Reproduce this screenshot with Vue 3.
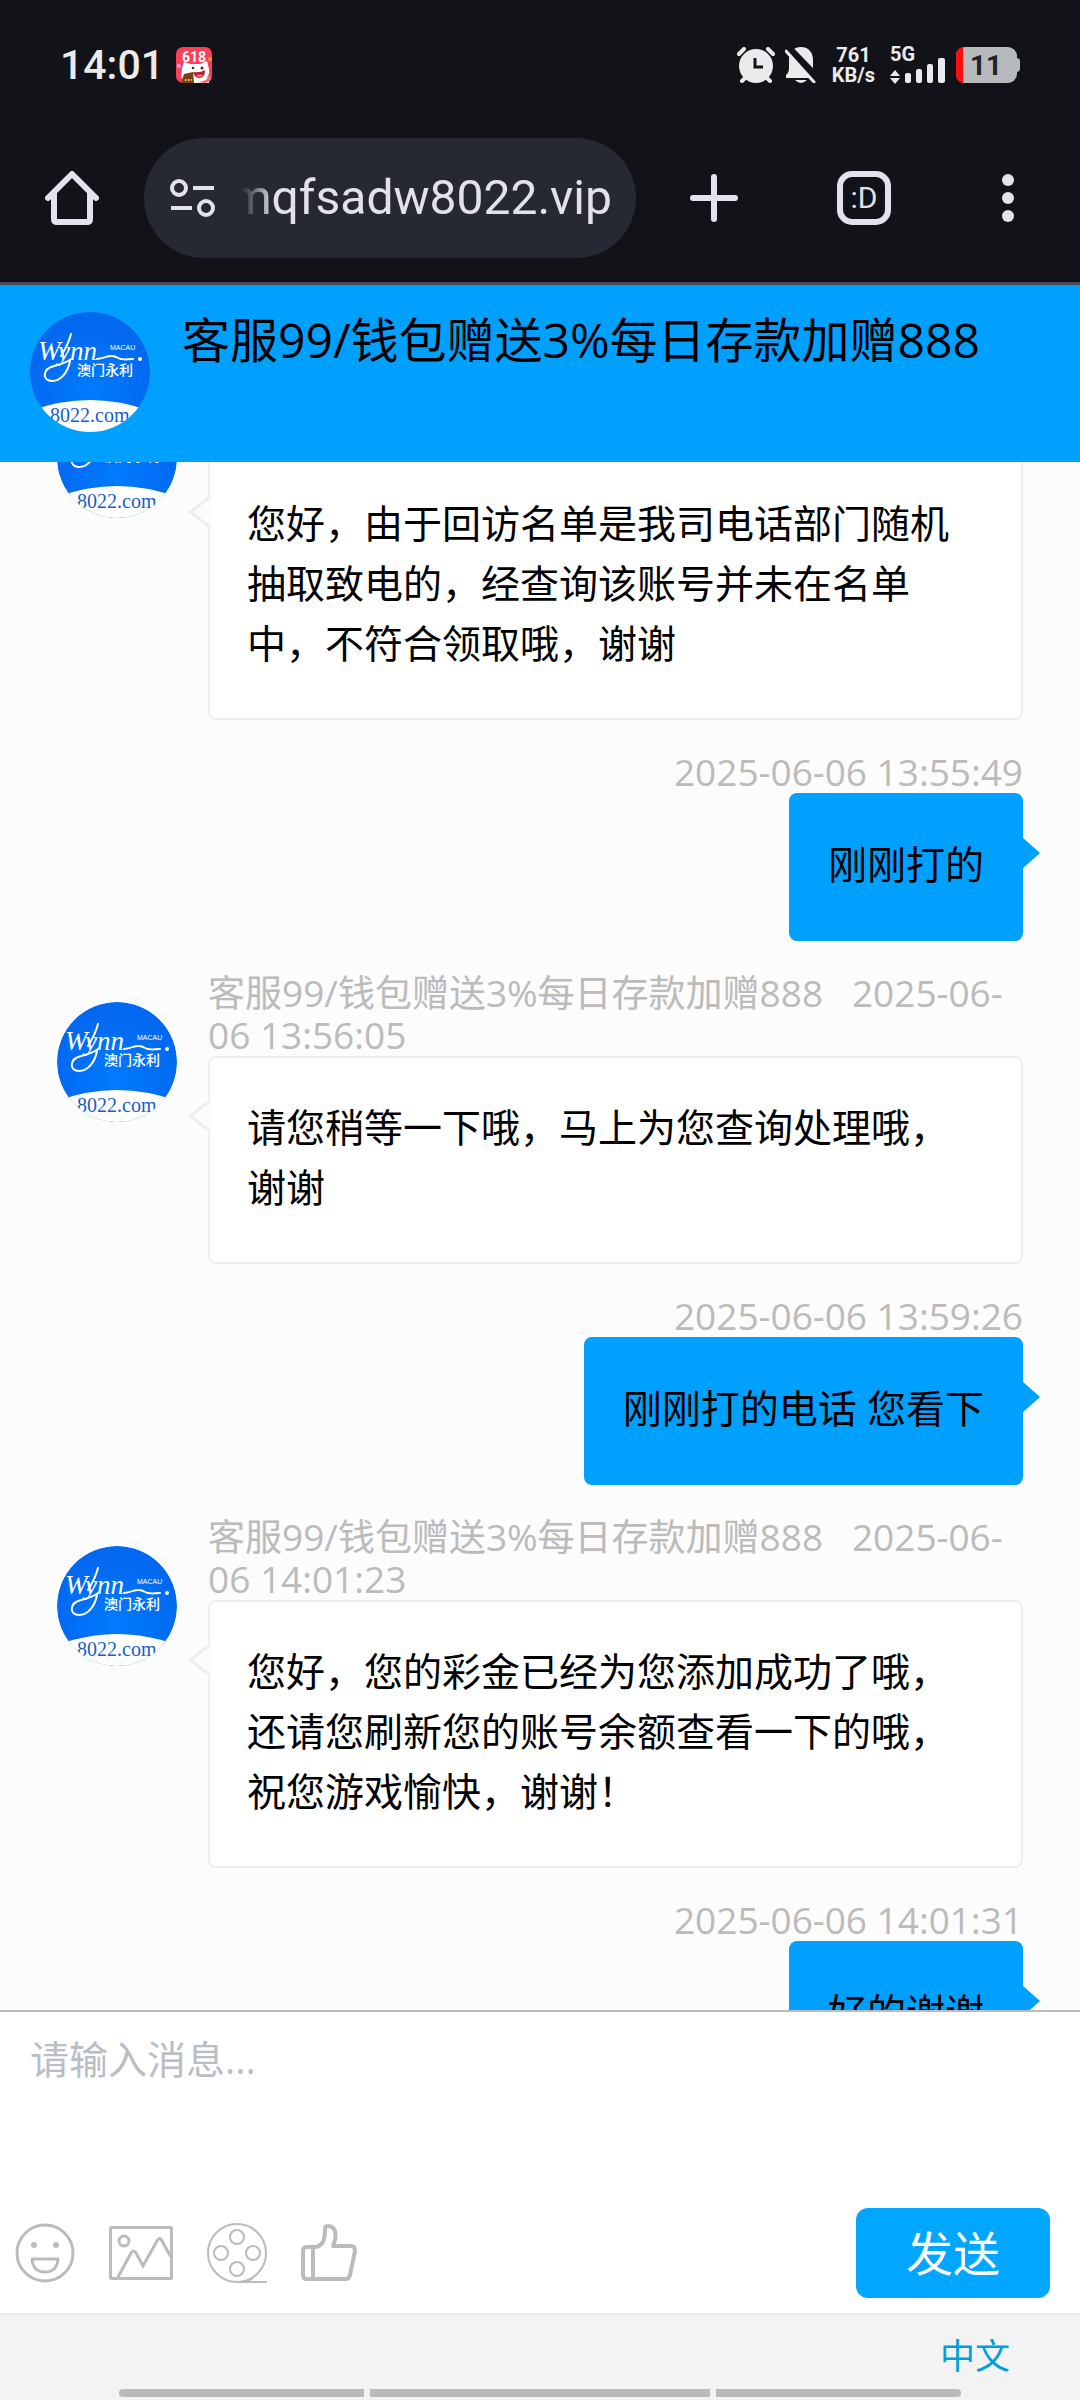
<template>
  <div class="screen">
    <svg class="sprite" aria-hidden="true">
      <defs>
        <radialGradient id="logo-bg" cx="50%" cy="65%" r="55%">
          <stop offset="0" stop-color="#007bff" />
          <stop offset="1" stop-color="#0368f0" />
        </radialGradient>
        <clipPath id="logo-clip"><circle cx="60" cy="60" r="60" /></clipPath>
        <symbol id="logo" viewBox="0 0 120 120">
          <g clip-path="url(#logo-clip)">
            <rect width="120" height="120" fill="url(#logo-bg)" />
            <path d="M0 99Q60 77 120 99V120H0Z" fill="#fff" />
            <text x="8" y="48" class="logo-script">Wynn</text>
            <path
              d="M41 22C39 30 36 36 31 44M40 49C38 60 31 69 22 69C12 69 12 57 24 54C31 52 36 51 41 47M67 47C76 46 80 42 86 45C92 49 96 47 103 47"
              fill="none"
              stroke="#fff"
              stroke-width="2"
              stroke-linecap="round"
            />
            <circle cx="110" cy="47" r="2" fill="#fff" />
            <text x="80" y="38" class="logo-macau">MACAU</text>
            <text x="47" y="63" class="logo-cn">澳门永利</text>
            <text x="20" y="110" class="logo-site">8022.com</text>
          </g>
        </symbol>
      </defs>
    </svg>

    <div class="status">
      <span class="clock">14:01</span>
      <svg class="app-icon" viewBox="0 0 36 36" width="36" height="36">
        <rect width="36" height="36" rx="7" fill="#fb3f58" />
        <circle cx="3" cy="19" r="2" fill="#d9a0ff" />
        <circle cx="34" cy="12" r="2" fill="#ff9a3c" />
        <path d="M6 21L8 15L14 17H24L31 14L33 22Q34 30 28 32L33 30V36H10L5 30Z" fill="#fff" />
        <circle cx="17" cy="21" r="1.3" fill="#333" />
        <circle cx="26" cy="21" r="1.5" fill="#333" />
        <path d="M17 25Q24 26 29 23Q29 31 23 31Q18 30 17 25Z" fill="#b3202c" />
        <path d="M20 28Q24 27 27 28Q24 32 20 28Z" fill="#ff7a86" />
        <path d="M22 35Q32 34 33 28L35 31Q34 36 28 36Z" fill="#fb6a78" />
        <path d="M8 27L17 25L18 36H5Z" fill="#7a3f12" />
        <path d="M9 33H16" stroke="#f3cf9a" stroke-width="1.5" stroke-dasharray="2 1" />
        <text x="6" y="15" class="sale">618</text>
      </svg>
      <div class="status-icons">
        <svg viewBox="0 0 38 36" width="38" height="36">
          <g stroke="#ebebeb" stroke-width="4" stroke-linecap="round">
            <path d="M2 7L7 2M31 2L36 7M5 34L9 30M29 30L33 34" />
          </g>
          <circle cx="19" cy="19" r="17" fill="#ebebeb" />
          <path d="M18 11V20H26" fill="none" stroke="#121318" stroke-width="3" />
        </svg>
        <svg class="bell" viewBox="0 0 32 36" width="32" height="36">
          <path
            d="M16 0C24 0 28 6 28 13V21Q28 25 31 28V31H1V28Q4 26 4 21V13C4 6 8 0 16 0Z"
            fill="#ebebeb"
          />
          <path d="M10 33H22Q16 39 10 33Z" fill="#ebebeb" />
          <path d="M3 1L33 32" stroke="#121318" stroke-width="8" />
          <path d="M1 4L29 35" stroke="#ebebeb" stroke-width="3" stroke-linecap="round" />
        </svg>
        <div class="speed"><span>761</span><span>KB/s</span></div>
        <svg class="signal" viewBox="0 0 56 36" width="56" height="36">
          <text x="0" y="14" class="network">5G</text>
          <path d="M0 29L5 23L10 29ZM0 31L5 37L10 31Z" fill="#ebebeb" />
          <rect x="15" y="26" width="6" height="10" rx="2" fill="#ebebeb" />
          <rect x="26" y="22" width="6" height="14" rx="2" fill="#ebebeb" />
          <rect x="37" y="17" width="6" height="19" rx="2" fill="#ebebeb" />
          <rect x="48" y="11" width="7" height="25" rx="2" fill="#ebebeb" />
        </svg>
        <svg viewBox="0 0 64 36" width="64" height="36">
          <path d="M60 11Q64 11 64 14V22Q64 25 60 25Z" fill="#b7babb" />
          <rect width="61" height="36" rx="9" fill="#b7babb" />
          <path d="M7 0V36Q0 35 0 27V9Q0 1 7 0Z" fill="#fc0d0d" />
          <text x="30" y="28" class="charge">11</text>
        </svg>
      </div>
    </div>

    <nav class="toolbar">
      <button class="tool home" aria-label="Home">
        <svg viewBox="0 0 54 54" width="54" height="54">
          <path
            d="M3 27L27 3L51 27M9 23V48Q9 51 12 51H42Q45 51 45 48V23"
            fill="none"
            stroke="#e3e1ec"
            stroke-width="6"
            stroke-linecap="round"
            stroke-linejoin="round"
          />
        </svg>
      </button>
      <div class="address">
        <svg viewBox="0 0 46 38" width="46" height="38" fill="none" stroke="#e3e1ec" stroke-width="4">
          <circle cx="9" cy="9" r="7" />
          <path d="M23 9H44M1 29H22" />
          <circle cx="36" cy="29" r="7" />
        </svg>
        <div class="url"><span>mqfsadw8022.vip</span></div>
      </div>
      <button class="tool plus" aria-label="New tab">
        <svg viewBox="0 0 48 48" width="48" height="48">
          <path d="M24 3V45M3 24H45" stroke="#e3e1ec" stroke-width="6" stroke-linecap="round" />
        </svg>
      </button>
      <button class="tool" aria-label="Tabs"><span class="tabs">:D</span></button>
      <button class="tool" aria-label="Menu">
        <svg viewBox="0 0 12 48" width="12" height="48" fill="#e3e1ec">
          <circle cx="6" cy="6" r="6" />
          <circle cx="6" cy="24" r="6" />
          <circle cx="6" cy="42" r="6" />
        </svg>
      </button>
    </nav>

    <header class="header">
      <svg class="avatar"><use href="#logo" /></svg>
      <h1>{{ agent }}</h1>
    </header>

    <main ref="chat" class="chat">
      <div v-for="msg in messages" :key="msg.time" class="message" :class="{ mine: msg.mine }">
        <svg v-if="!msg.mine" class="avatar"><use href="#logo" /></svg>
        <div class="content">
          <div class="meta">{{ msg.mine ? msg.time : `${agent}\u00a0\u00a0 ${msg.time}` }}</div>
          <div class="bubble">
            {{ msg.text }}
            <svg v-if="msg.mine" class="arrow" viewBox="0 0 18 32">
              <path d="M0 0L18 16L0 32Z" fill="#00a0ff" />
            </svg>
            <svg v-else class="arrow" viewBox="0 0 24 32">
              <path d="M24 0L3 16L24 32" fill="#fcfcfc" stroke="#eee" stroke-width="3" />
            </svg>
          </div>
        </div>
      </div>
    </main>

    <form class="composer" @submit.prevent="send">
      <textarea v-model="draft" aria-label="请输入消息..." placeholder="请输入消息..."></textarea>
      <div class="actions">
        <button type="button" class="action" aria-label="表情">
          <svg viewBox="0 0 60 60" width="60" height="60" fill="none" stroke="#bbb" stroke-width="3">
            <circle cx="30" cy="30" r="28" />
            <circle cx="19" cy="22" r="3" fill="#bbb" stroke="none" />
            <circle cx="41" cy="22" r="3" fill="#bbb" stroke="none" />
            <path d="M17 36H43Q42 49 30 49T17 36Z" stroke-linejoin="round" />
          </svg>
        </button>
        <button type="button" class="action" aria-label="图片">
          <svg viewBox="0 0 64 54" width="64" height="54" fill="none" stroke="#bbb" stroke-width="3">
            <rect x="1.5" y="1.5" width="61" height="51" rx="1" />
            <circle cx="15" cy="15" r="5" />
            <path d="M9 51L22 27Q24 23 27 27L34 40L48 15Q51 10 53 15L62 31" />
          </svg>
        </button>
        <button type="button" class="action" aria-label="视频">
          <svg viewBox="0 0 60 60" width="60" height="60" fill="none" stroke="#bbb" stroke-width="2">
            <circle cx="30" cy="30" r="29" />
            <circle cx="30" cy="14" r="7" />
            <circle cx="14" cy="30" r="7" />
            <circle cx="46" cy="30" r="7" />
            <circle cx="30" cy="46" r="7" />
            <path d="M30 59H60M35 59Q42 58 46 55" />
          </svg>
        </button>
        <button type="button" class="action" aria-label="点赞">
          <svg viewBox="0 0 56 58" width="56" height="58" fill="none" stroke="#bbb" stroke-width="4">
            <path
              d="M14 23H6Q2 23 2 27V51Q2 55 6 55H45Q48 55 49 51L54 27Q54 22 50 22H32Q36 12 34 7Q32 2 27 2Q24 2 24 5C24 16 22 22 14 23ZM12 23V55"
              stroke-linejoin="round"
            />
          </svg>
        </button>
        <button type="submit" class="send">发送</button>
      </div>
    </form>

    <footer class="footer">
      <a href="#">中文</a>
      <div class="gesture"><i></i><i></i><i></i></div>
    </footer>
  </div>
</template>

<script setup>
import { onMounted, ref } from 'vue'

const agent = '客服99/钱包赠送3%每日存款加赠888'
const chat = ref(null)
const draft = ref('')

const messages = ref([
  {
    time: '2025-06-06 13:54:52',
    text: '您好，由于回访名单是我司电话部门随机抽取致电的，经查询该账号并未在名单中，不符合领取哦，谢谢'
  },
  { time: '2025-06-06 13:55:49', text: '刚刚打的', mine: true },
  { time: '2025-06-06 13:56:05', text: '请您稍等一下哦，马上为您查询处理哦，谢谢' },
  { time: '2025-06-06 13:59:26', text: '刚刚打的电话 您看下', mine: true },
  {
    time: '2025-06-06 14:01:23',
    text: '您好，您的彩金已经为您添加成功了哦，还请您刷新您的账号余额查看一下的哦，祝您游戏愉快，谢谢！'
  },
  { time: '2025-06-06 14:01:31', text: '好的谢谢', mine: true }
])

const send = () => {
  if (!draft.value.trim()) return
  const now = new Date()
  messages.value.push({
    time: `${now.toLocaleDateString('sv')} ${now.toLocaleTimeString('sv')}`,
    text: draft.value,
    mine: true
  })
  draft.value = ''
}

onMounted(() => {
  chat.value.scrollTop = 94
})
</script>

<style>
body {
  background: #fcfcfc;
}
</style>

<style scoped>
.screen {
  display: flex;
  flex-direction: column;
  height: 100vh;
  font-family: 'Open Sans', 'Noto Sans CJK SC', sans-serif;
  color: #000;
}

button {
  padding: 0;
  border: 0;
  background: none;
  font-family: inherit;
}

svg {
  display: block;
  flex: none;
}

.sprite {
  position: absolute;
  width: 0;
  height: 0;
}

.logo-script {
  font: italic 27px 'Liberation Serif', serif;
  fill: #fff;
}

.logo-macau {
  font: 7px 'Liberation Sans', sans-serif;
  fill: #fff;
}

.logo-cn {
  font: 500 14px 'Noto Sans CJK SC', sans-serif;
  fill: #fff;
}

.logo-site {
  font: 20px 'Liberation Serif', serif;
  fill: #175fc4;
}

.status {
  display: flex;
  align-items: center;
  height: 130px;
  padding: 0 60px;
  background: #121318;
  color: #ebebeb;
  font-family: Roboto, sans-serif;
}

.clock {
  font-size: 41px;
  font-weight: 500;
}

.app-icon {
  margin-left: 12px;
}

.sale {
  font: bold 14px Roboto, sans-serif;
  fill: #fff;
}

.status-icons {
  display: flex;
  align-items: center;
  gap: 10px;
  margin-left: auto;
}

.speed {
  display: flex;
  flex-direction: column;
  align-items: center;
  margin: 0 5px;
  font-size: 20px;
  font-weight: 700;
  line-height: 20px;
}

.signal {
  overflow: visible;
}

.network {
  font: bold 20px Roboto, sans-serif;
  fill: #ebebeb;
}

.charge {
  font: bold 28px Roboto, sans-serif;
  text-anchor: middle;
  fill: #222;
}

.toolbar {
  display: flex;
  align-items: center;
  padding: 8px 0 24px;
  border-bottom: 3px solid #484c59;
  background: #121318;
}

.tool {
  display: flex;
  flex: none;
  align-items: center;
  justify-content: center;
  width: 144px;
  height: 120px;
}

.plus {
  width: 156px;
}

.address {
  display: flex;
  flex: 1;
  align-items: center;
  gap: 26px;
  min-width: 0;
  height: 120px;
  padding: 0 24px 0 26px;
  border-radius: 60px;
  background: #262834;
  box-sizing: border-box;
}

.url {
  display: flex;
  flex: 1;
  justify-content: flex-end;
  overflow: hidden;
  color: #e3e1ec;
  font: 48px/64px Roboto, sans-serif;
  mask-image: linear-gradient(90deg, transparent, #000 32px);
}

.tabs {
  width: 54px;
  border: 6px solid #e3e1ec;
  border-radius: 15px;
  color: #e3e1ec;
  font: 30px/42px Roboto, sans-serif;
  box-sizing: border-box;
}

.header {
  display: flex;
  gap: 32px;
  padding: 27px 30px 30px;
  background: #00a0ff;
}

.header h1 {
  margin: 0;
  font-size: 48px;
  font-weight: 400;
  line-height: 56px;
}

.avatar {
  width: 120px;
  height: 120px;
}

.chat {
  flex: 1;
  min-height: 0;
  overflow-y: auto;
  background: #fcfcfc;
  scrollbar-width: none;
}

.message {
  display: flex;
  gap: 31px;
  margin-bottom: 31px;
  padding: 0 57px;
}

.message .avatar {
  margin-top: 30px;
  border-radius: 50%;
}

.content {
  flex: 1;
  min-width: 0;
}

.mine .content {
  display: flex;
  flex-direction: column;
  align-items: flex-end;
}

.meta {
  color: #bbb;
  font-size: 37px;
  line-height: 42px;
}

.bubble {
  position: relative;
  padding: 39px 37px 45px;
  border: 2px solid #eee;
  border-radius: 8px;
  background: #fff;
  font-size: 39px;
  line-height: 60px;
}

.mine .bubble {
  border-color: #00a0ff;
  background: #00a0ff;
}

.arrow {
  position: absolute;
  top: 42px;
  left: -23px;
  width: 24px;
  height: 32px;
}

.mine .arrow {
  right: -19px;
  left: auto;
  width: 18px;
}

.composer {
  border-top: 2px solid #bbb;
  background: #fff;
}

textarea {
  display: block;
  width: 100%;
  height: 196px;
  padding: 20px 30px;
  border: 0;
  outline: 0;
  background: none;
  font: inherit;
  font-size: 39px;
  line-height: 54px;
  resize: none;
  box-sizing: border-box;
}

textarea::placeholder {
  color: #b9bec6;
}

.actions {
  display: flex;
  align-items: center;
  gap: 34px;
  padding: 0 30px 15px 15px;
}

.send {
  width: 194px;
  height: 90px;
  margin-left: auto;
  padding-bottom: 6px;
  border-radius: 12px;
  background: #00a6ff;
  color: #fff;
  font-size: 47px;
}

.footer {
  display: flex;
  flex-direction: column;
  padding-bottom: 3px;
  border-top: 2px solid #ebebeb;
  background: #f3f3f3;
}

.footer a {
  align-self: flex-end;
  margin-right: 70px;
  padding: 16px 0 8px;
  color: #00a0dc;
  font-size: 35px;
  line-height: 50px;
  text-decoration: none;
}

.gesture {
  display: grid;
  grid-template-columns: 245fr 339fr 245fr;
  gap: 6px;
  padding: 0 119px;
}

.gesture i {
  height: 8px;
  background: #b9b9b9;
}

.gesture i:first-child {
  border-radius: 4px 0 0 4px;
}

.gesture i:last-child {
  border-radius: 0 4px 4px 0;
}
</style>
